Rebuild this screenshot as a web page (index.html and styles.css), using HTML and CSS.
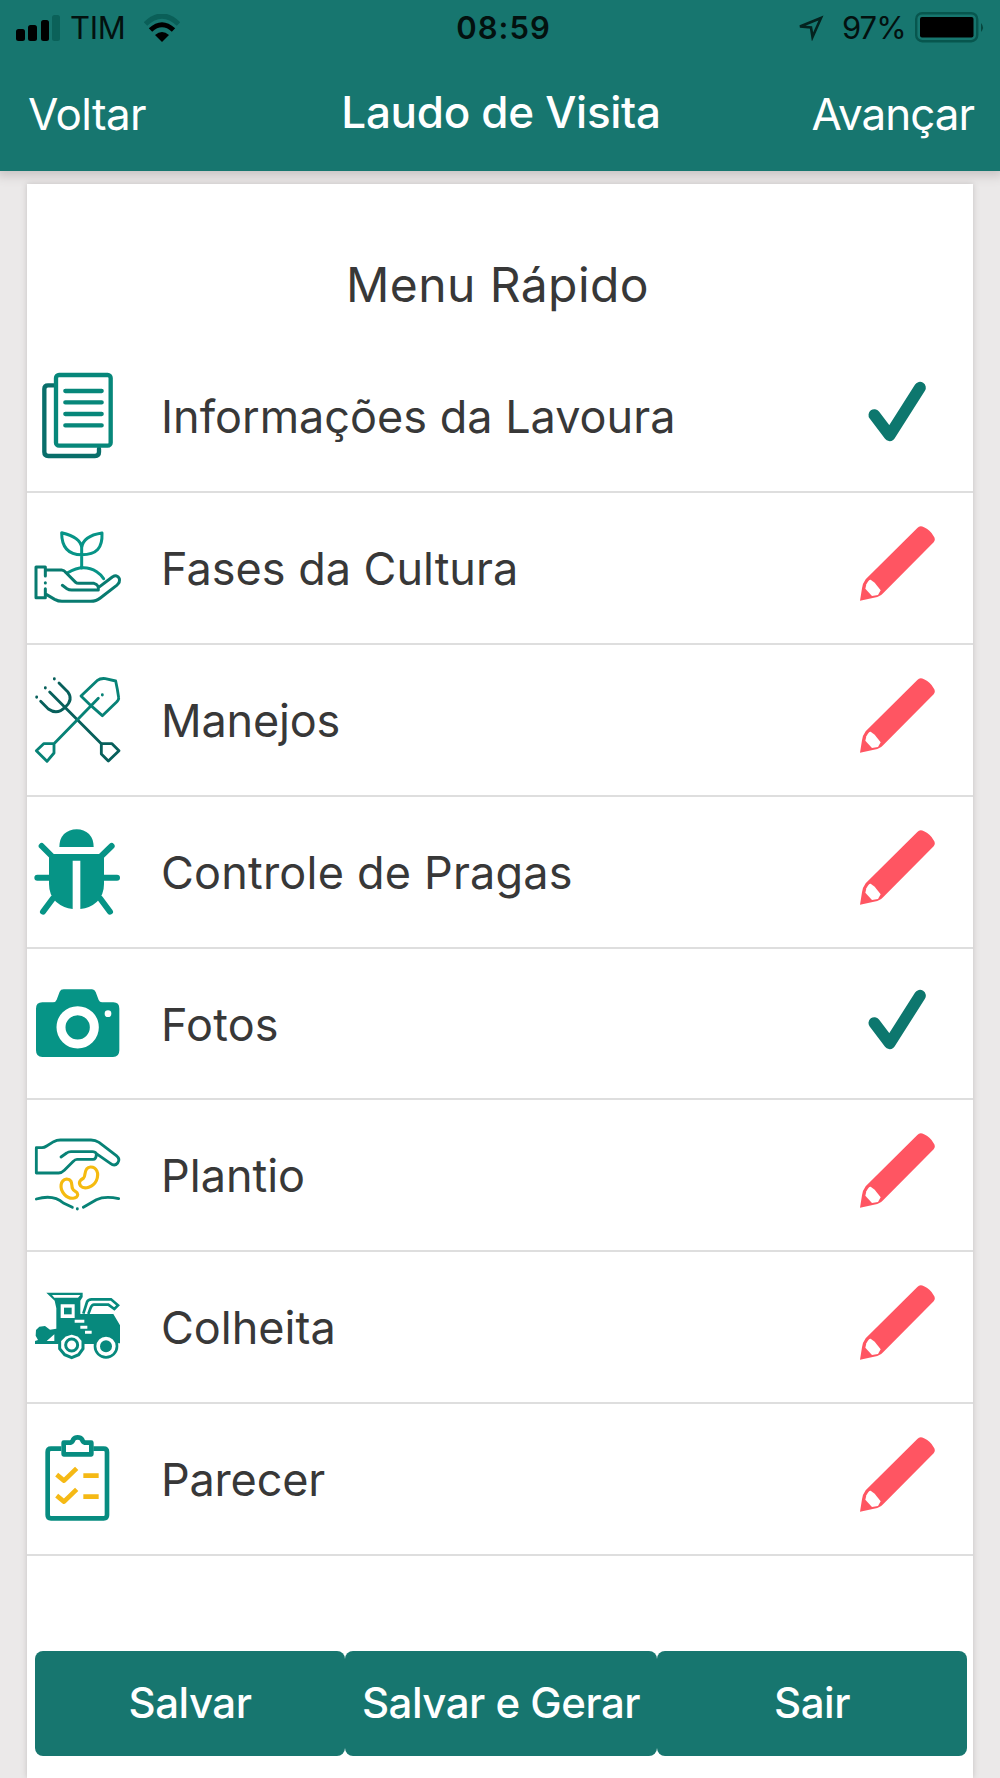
FILE: index.html
```html
<!DOCTYPE html>
<html lang="pt-BR">
<head>
<meta charset="utf-8">
<title>Laudo de Visita</title>
<link rel="stylesheet" href="styles.css">
</head>
<body>
<svg class="defs" aria-hidden="true">
  <symbol id="check" viewBox="60 3 270 270"><path d="M103 135 149 196 240 53" fill="none" stroke="#0d776e" stroke-width="35" stroke-linecap="round" stroke-linejoin="round"/></symbol>
  <symbol id="pencil" viewBox="60 459 270 270">
    <path d="M60 692 66 655Q68 640 77 628L232 474Q240 465 252 472Q270 479 281 499Q288 509 281 517L130 669Q124 677 112 681Z" fill="#ff5562"/>
    <path d="M79 643Q86 628 92 629L104 638 122 661 114 675 96 678 76 656Z" fill="#fff"/>
  </symbol>
</svg>
<header class="header">
  <div class="status">
    <div class="carrier">
      <svg width="46" height="28" viewBox="0 0 46 28"><rect x="0" y="15" width="9" height="12" rx="2.5"/><rect x="12" y="11" width="9" height="16" rx="2.5"/><rect x="25" y="6" width="8" height="21" rx="2.5"/><rect x="36" y="1" width="8" height="26" rx="2.5" fill="#0b6159"/></svg>
      <span class="tim">TIM</span>
      <svg class="wifi" width="36" height="28" viewBox="0 0 36 28" fill="none"><path d="M1.500 10Q18-6 34.500 10" stroke="#0a5f58" stroke-width="5"/><path d="M6.500 16Q18 5.500 29.500 16" stroke="#000" stroke-width="5"/><path d="M11 21Q18 15 25 21L18 28Z" fill="#000"/></svg>
    </div>
    <span class="clock">08:59</span>
    <div class="power">
      <svg width="26" height="26" viewBox="0 0 26 26" fill="none" stroke="#04231f" stroke-width="2.600"><path d="M2 11.500 23 3 14.500 22 13 12.500Z"/></svg>
      <span class="pct">97%</span>
      <svg width="70" height="32" viewBox="0 0 70 32"><rect x="1.200" y="1.200" width="61" height="28" rx="6" fill="none" stroke="#07564e" stroke-width="2.400"/><rect x="5" y="5" width="53.500" height="20.500" rx="2"/><path d="M66 11Q70 15.500 66 20Z" fill="#07473f"/></svg>
    </div>
  </div>
  <nav class="nav"><span class="back">Voltar</span><h1 class="title">Laudo de Visita</h1><span class="next">Avançar</span></nav>
</header>
<main class="card">
  <h2 class="menu-title">Menu Rápido</h2>
  <ul class="menu">
    <li class="row">
      <svg class="icon" viewBox="21 3 309 330" fill="none" stroke="#07877a" stroke-width="13" stroke-linecap="round" stroke-linejoin="round"><path d="M101 76H84Q73 76 73 87V276Q73 288 85 288H225Q237 288 237 276V266" stroke="#096e6a"/><rect x="108" y="45" width="164" height="212" rx="9"/><path d="M136 93H245M136 127H245M136 162H245M136 196H245"/></svg>
      <span class="label l1">Informações da Lavoura</span><svg class="state"><use href="#check"/></svg>
    </li>
    <li class="row">
      <svg class="icon" viewBox="21 -6 309 330" fill="none" stroke="#087b70" stroke-width="9" stroke-linecap="round" stroke-linejoin="round"><path d="M185 160V94M185 119C145 119 125 97 125 53C163 62 183 75 185 98C188 74 206 60 246 54C248 99 230 119 185 119M143 173Q190 145 230 170Q244 179 251 191" stroke="#079487"/><path d="M76 183V156H48V248H76V221M76 203V204" /><path d="M78 165H125Q132 165 139 174L167 202Q170 205 176 205H222Q238 210 235 225H155Q147 225 141 221L127 211M235 218 277 186Q292 177 298 191Q301 202 290 211L241 249Q229 259 212 259H126Q115 259 104 253L80 239"/></svg>
      <span class="label l2">Fases da Cultura</span><svg class="state"><use href="#pencil"/></svg>
    </li>
    <li class="row">
      <svg class="icon" viewBox="21 0 309 330" fill="none" stroke="#078276" stroke-width="8.500" stroke-linecap="round" stroke-linejoin="round"><path d="M89 81 244 236M117 54 143 80Q161 104 136 126Q112 151 85 132L62 109M103 41V42M76 68V69M50 96V97" stroke="#075f5b"/><path d="M102 236 235 100M247 89V90M213 122 183 93 231 47Q242 39 256 41L287 48Q292 70 296 98Q297 104 289 112L247 152 213 122M102 236V264L81 289 49 257 71 236Z"/><path d="M244 236H276L297 257 265 288 244 267Z" stroke="#075f5b"/></svg>
      <span class="label l3">Manejos</span><svg class="state"><use href="#pencil"/></svg>
    </li>
    <li class="row">
      <svg class="icon" viewBox="21 6 309 330"><path d="M118 96Q118 72 132 57Q148 43 170 43Q192 43 207 57Q221 72 221 96Z" fill="#069486"/><path d="M65 93 98 126M275 93 241 126M52 188H90M250 188H291M98 251 69 290M241 251 270 290" fill="none" stroke="#069486" stroke-width="18" stroke-linecap="round"/><path d="M87 117H252V207Q252 240 231 260Q210 279 181 282V137H158V282Q130 279 108 260Q87 240 87 207Z" fill="#069486"/></svg>
      <span class="label l4">Controle de Pragas</span><svg class="state"><use href="#pencil"/></svg>
    </li>
    <li class="row">
      <svg class="icon" viewBox="21 -3 309 330"><path d="M67 97H99Q107 97 110 89L119 65Q122 58 131 58H216Q224 58 227 66L236 90Q239 97 246 97H280Q298 97 298 116V241Q298 261 279 261H67Q48 261 48 241V116Q48 97 67 97Z" fill="#069486"/><circle cx="173" cy="172" r="50" fill="none" stroke="#fff" stroke-width="27"/><circle cx="264" cy="131" r="10" fill="#fff"/></svg>
      <span class="label l5">Fotos</span><svg class="state"><use href="#check"/></svg>
    </li>
    <li class="row">
      <svg class="icon" viewBox="21 -12 309 330" fill="none" stroke="#078276" stroke-width="8.500" stroke-linecap="round" stroke-linejoin="round"><path d="M123 99 140 87Q145 83 153 83H217Q226 83 229 89L271 118Q284 128 293 117Q302 106 289 95L237 55Q226 48 213 48H121Q110 48 101 53L80 66Q73 71 66 71H49V147H116Q125 147 133 139L160 112Q165 106 171 106H219Q229 106 229 89"/><path d="M49 225Q100 210 130 237L157 250M190 250 229 227Q255 215 296 224M172 254V255"/><path d="M140 165C121 168 117 193 133 211C149 229 175 224 173 211C172 201 161 204 157 193C154 181 158 166 140 165ZM211 129C190 130 198 157 191 162C180 168 174 175 182 186C193 198 220 189 229 170C239 147 229 128 211 129Z" stroke="#f5bb10" stroke-width="9.500"/></svg>
      <span class="label l6">Plantio</span><svg class="state"><use href="#pencil"/></svg>
    </li>
    <li class="row">
      <svg class="icon" viewBox="21 -6 309 330"><path d="M79 56H188V69L181 80V120H280L300 154V208H290L270 188H245L225 210H193L176 187 137 186 115 210H45V201L54 198 47 185 48 168 58 158 75 156 90 167 109 164V103L104 80Z" fill="#07897d"/><path d="M96 63 103 71H174L181 63ZM122 91H164V132H122ZM103 181 80 201H103Z" fill="#fff"/><rect x="132" y="101" width="23" height="20" fill="#07897d"/><path d="M164 142H193M181 160H202M195 175H215" stroke="#fff" stroke-width="9"/><path d="M190 119 201 84Q204 76 215 76H273L294 94 283 105 265 92H222Q216 92 212 101L205 120" fill="#fff" stroke="#07897d" stroke-width="8"/><g fill="#fff" stroke="#07897d"><path d="M155 177 176 184 189 199V224L176 242 155 251 134 242 119 224V199L134 184Z" stroke-width="9"/><circle cx="155" cy="213" r="18" stroke-width="9"/><circle cx="258" cy="217" r="33" stroke-width="8"/></g><circle cx="258" cy="217" r="18" fill="#07897d"/></svg>
      <span class="label l7">Colheita</span><svg class="state"><use href="#pencil"/></svg>
    </li>
    <li class="row">
      <svg class="icon" viewBox="21 0 309 330" fill="none" stroke="#078c80" stroke-width="14" stroke-linejoin="round"><path d="M124 74H93Q83 74 83 84V273Q83 283 93 283H251Q261 283 261 273V84Q261 74 251 74H220"/><path d="M131 56H151Q158 54 160 46Q164 40 173 40Q182 40 186 46Q188 54 195 56H214V91H131Z"/><path d="M110 152 132 170 170 133M110 215 132 233 170 196M190 155H236M190 218H236" stroke="#f5b915"/></svg>
      <span class="label l8">Parecer</span><svg class="state"><use href="#pencil"/></svg>
    </li>
  </ul>
  <footer class="actions"><button class="btn b1">Salvar</button><button class="btn b2">Salvar e Gerar</button><button class="btn b3">Sair</button></footer>
</main>
</body>
</html>
```
FILE: styles.css
```css
* { box-sizing: border-box; }
body { margin: 0; width: 1000px; height: 1778px; overflow: hidden; background: #ebe9e9; font-family: Inter, "Liberation Sans", sans-serif; color: #383838; }
.defs { display: none; }
.header { height: 171px; background: #17766f; box-shadow: 0 2px 10px 3px #c9c4c4; padding-top: 12px; }
.status { display: grid; grid-template-columns: 1fr auto 1fr; align-items: center; height: 32px; padding: 0 15px 0 16px; color: #03110f; font-size: 31px; line-height: 32px; }
.carrier, .power { display: flex; align-items: center; }
.power { justify-content: flex-end; }
.tim { margin-left: 8px; width: 56px; letter-spacing: -.3px; }
.wifi { margin-left: 18px; }
.clock { font-weight: 600; letter-spacing: 1px; padding-left: 6px; }
.pct { margin: 0 9px 0 18px; width: 64px; letter-spacing: -1px; }
.nav { display: grid; grid-template-columns: 1fr auto 1fr; align-items: center; height: 80px; margin-top: 28px; padding: 4px 26px 0 28px; color: #fff; font-size: 44px; line-height: 60px; white-space: nowrap; }
.title { margin: 0; font-size: 44px; font-weight: 500; padding-bottom: 4px; letter-spacing: -.3px; }
.back { letter-spacing: -.6px; }
.next { text-align: right; letter-spacing: -1px; }
.card { width: 946px; height: 1594px; margin: 13px auto 0; background: #fff; box-shadow: 0 0 6px #c4c0c0; }
.menu-title { margin: 0; height: 157px; padding: 71px 5px 0 0; text-align: center; font-size: 48px; letter-spacing: .4px; line-height: 60px; font-weight: 400; }
.menu { margin: 0; padding: 0; list-style: none; }
.row { display: flex; align-items: center; height: 151.9px; padding-right: 23px; border-bottom: 2px solid #dedede; }
.icon { width: 103px; height: 110px; }
.label { flex: 1; margin-left: 31px; padding-top: 2px; font-size: 45px; line-height: 60px; white-space: nowrap; }
.l3, .l8 { letter-spacing: -.2px; }
.l4, .l5 { letter-spacing: .2px; }
.state { width: 90px; height: 90px; }
.actions { display: grid; grid-template-columns: 310px 312px 310px; height: 105px; margin: 94.8px 0 0 8px; }
.btn { border: 0; border-radius: 8px; background: #17766f; color: #fff; font: 500 42px/60px Inter, "Liberation Sans", sans-serif; letter-spacing: -.5px; padding: 0; white-space: nowrap; }
```
